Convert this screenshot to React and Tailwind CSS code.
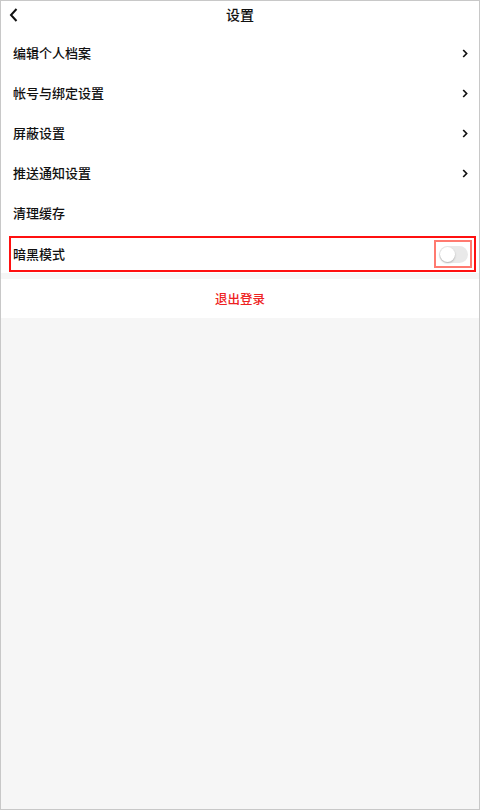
export default function App() {
  const rows = [
    { label: "编辑个人档案", arrow: true },
    { label: "帐号与绑定设置", arrow: true },
    { label: "屏蔽设置", arrow: true },
    { label: "推送通知设置", arrow: true },
    { label: "清理缓存", arrow: false },
  ];
  const Chevron = () => (
    <svg width="6" height="9" viewBox="0 0 6 9" className="mr-[11px]">
      <path d="M1.2 1 L4.6 4.5 L1.2 8" fill="none" stroke="#111" strokeWidth="1.7" />
    </svg>
  );
  return (
    <div
      className="w-[480px] h-[810px] bg-[#f6f6f6] border border-[#c8c8c8] flex flex-col"
      style={{ fontFamily: '"Noto Sans CJK SC", "Noto Sans", sans-serif' }}
    >
      <div className="bg-white">
        <div className="h-[32px] relative flex justify-center pt-[6px]">
          <svg width="10" height="16" viewBox="0 0 10 16" className="absolute left-[8px] top-[6px]">
            <path d="M7.5 2 L2 8 L7.5 14" fill="none" stroke="#111" strokeWidth="2" />
          </svg>
          <span className="text-[14px] font-medium text-[#111] leading-none">设置</span>
        </div>
        {rows.map((r) => (
          <div key={r.label} className="h-[40px] flex items-center justify-between pl-[12px]">
            <span className="text-[13px] font-medium text-[#111]">{r.label}</span>
            {r.arrow && <Chevron />}
          </div>
        ))}
        <div className="h-[40px] flex items-center pl-[8px] pr-[3px] pt-[2px]">
          <div className="flex-1 h-[36px] border-2 border-[#ff1010] flex items-center justify-between pl-[2px] pr-[2px]">
            <span className="text-[13px] font-medium text-[#111]">暗黑模式</span>
            <div className="w-[38px] h-[28px] border-2 border-[#ff7a70] flex items-center justify-center">
              <div className="w-[29px] h-[17px] rounded-full bg-[#e9e9e9] flex items-center p-[1px]">
                <div className="w-[15px] h-[15px] rounded-full bg-white shadow-[0_1px_2px_rgba(0,0,0,0.25)]" />
              </div>
            </div>
          </div>
        </div>
      </div>
      <div className="h-[6px]" />
      <div className="bg-white h-[39px] flex items-center justify-center pt-[2px]">
        <span className="text-[12.5px] text-[#ee2222] font-medium">退出登录</span>
      </div>
    </div>
  );
}
